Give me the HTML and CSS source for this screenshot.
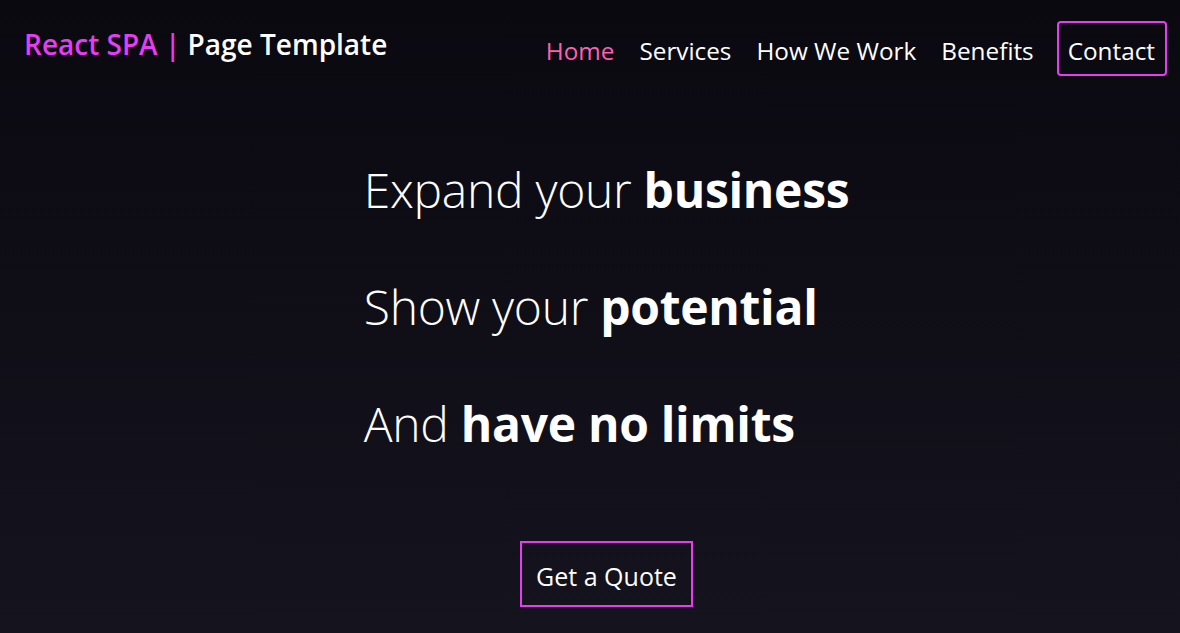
FILE: index.html
```html
<!DOCTYPE html>
<html lang="en">
<head>
<meta charset="utf-8">
<title>React SPA | Page Template</title>
<link rel="stylesheet" href="styles.css">
</head>
<body>
<div class="page">
  <header class="header">
    <div class="logo"><span class="logo-accent">React SPA |</span> Page Template</div>
    <nav>
      <ul class="nav">
        <li><a class="nav-link active" href="#">Home</a></li>
        <li><a class="nav-link" href="#">Services</a></li>
        <li><a class="nav-link" href="#">How We Work</a></li>
        <li><a class="nav-link" href="#">Benefits</a></li>
        <li><a class="nav-link contact" href="#">Contact</a></li>
      </ul>
    </nav>
  </header>
  <main class="hero">
    <div class="hero-lines">
      <h1 class="hero-line">Expand your <strong>business</strong></h1>
      <h1 class="hero-line">Show your <strong>potential</strong></h1>
      <h1 class="hero-line">And <strong>have no limits</strong></h1>
    </div>
    <a class="quote-btn" href="#">Get a Quote</a>
  </main>
</div>
</body>
</html>
```
FILE: styles.css
```css
* { box-sizing: border-box; }
html, body { margin: 0; padding: 0; height: 100%; }
body {
  font-family: "Open Sans", "Noto Sans", sans-serif;
  color: #ffffff;
  background: linear-gradient(180deg, #0a0910 0%, #15131e 100%);
}
.page { min-height: 100%; }
.header {
  display: flex;
  justify-content: space-between;
  align-items: flex-start;
  padding: 21px 13px 0 24px;
}
.logo {
  font-size: 28px;
  font-weight: 600;
  line-height: 1;
  margin-top: 9px;
}
.logo-accent { color: #e63cf2; }
.nav {
  list-style: none;
  margin: 0;
  padding: 0;
  display: flex;
  align-items: flex-start;
  gap: 21px;
}
.nav-link {
  display: block;
  color: #ffffff;
  text-decoration: none;
  font-size: 24.3px;
  line-height: 46px;
  padding: 5px 0 0;
  border: 2px solid transparent;
}
.nav-link.active { color: #ff5fb0; }
.nav-link.contact {
  border-color: #e63cf2;
  border-radius: 4px;
  padding: 5px 10px 0 9px;
}
.hero {
  display: flex;
  flex-direction: column;
  align-items: center;
  padding-left: 33px;
  padding-top: 80px;
}
.hero-lines {
  display: flex;
  flex-direction: column;
  gap: 49px;
}
.hero-line {
  margin: 0;
  font-size: 48px;
  font-weight: 300;
  line-height: 68px;
  letter-spacing: -0.3px;
}
.hero-line strong { font-weight: 700; }
.quote-btn {
  margin-top: 83px;
  display: block;
  color: #ffffff;
  text-decoration: none;
  font-size: 25px;
  line-height: 58px;
  padding: 4px 14px 0;
  border: 2px solid #e63cf2;
}
```
